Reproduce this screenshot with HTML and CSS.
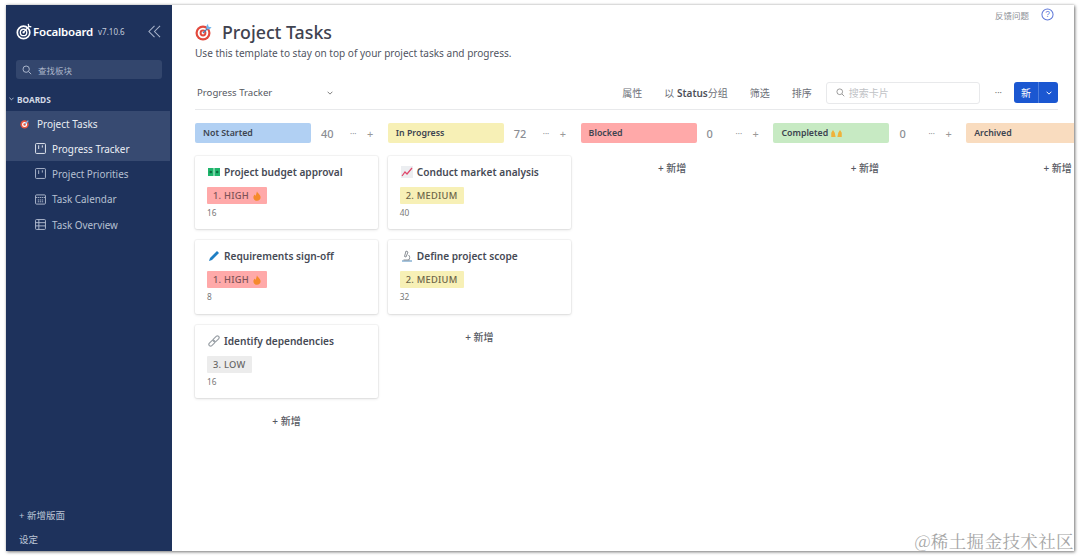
FILE: index.html
```html
<!DOCTYPE html>
<html lang="zh">
<head>
<meta charset="utf-8">
<title>Project Tasks</title>
<link rel="stylesheet" href="styles.css">
</head>
<body>
<div class="window">
  <aside class="sidebar">
    <div class="brand">
      <svg class="logo" viewBox="0 0 18 18" width="17" height="17"><circle cx="8" cy="10" r="6.600" fill="none" stroke="#fff" stroke-width="1.800"/><circle cx="8" cy="10" r="3.400" fill="none" stroke="#fff" stroke-width="1.400"/><circle cx="8" cy="10" r="1.200" fill="#fff"/><path d="M8 10 14 3M13 1l.6 2.600 2.600.4" fill="none" stroke="#fff" stroke-width="1.400"/></svg>
      <span class="brand-name">Focalboard</span>
      <span class="version">v7.10.6</span>
      <svg class="collapse" viewBox="0 0 14 14" width="13" height="13"><path d="M7 1 1 7l6 6M13 1 7 7l6 6" fill="none" stroke="#a9b4ca" stroke-width="1.100"/></svg>
    </div>
    <div class="side-search">
      <svg viewBox="0 0 12 12" width="10" height="10"><circle cx="5" cy="5" r="3.800" fill="none" stroke="#b5c0d4" stroke-width="1.100"/><path d="m8 8 3 3" stroke="#b5c0d4" stroke-width="1.100"/></svg>
      <span>查找板块</span>
    </div>
    <div class="section"><svg viewBox="0 0 6 4" width="5" height="4"><path d="m.5.5 2.500 2.500L5.500.5" fill="none" stroke="#c9d1e0" stroke-width="1"/></svg><span>BOARDS</span></div>
    <div class="active-group">
      <div class="board-row">
        <svg class="target-small" viewBox="0 0 12 12" width="10" height="10"><circle cx="5.500" cy="6.500" r="5" fill="#e8553f"/><circle cx="5.500" cy="6.500" r="3" fill="#fff"/><circle cx="5.500" cy="6.500" r="1.500" fill="#e8553f"/><path d="m6 6 4-4" stroke="#7fb2e5" stroke-width="1.500"/></svg>
        <span>Project Tasks</span>
      </div>
      <div class="view-row current">
        <svg viewBox="0 0 12 12" width="11" height="11"><rect x=".6" y=".6" width="10.800" height="10.800" rx="1" fill="none" stroke="currentColor"/><path d="M4 2.500v4M8 2.500v2.500" stroke="currentColor"/></svg>
        <span>Progress Tracker</span>
      </div>
    </div>
    <div class="view-row">
      <svg viewBox="0 0 12 12" width="11" height="11"><rect x=".6" y=".6" width="10.800" height="10.800" rx="1" fill="none" stroke="currentColor"/><path d="M4 2.500v4M8 2.500v2.500" stroke="currentColor"/></svg>
      <span>Project Priorities</span>
    </div>
    <div class="view-row">
      <svg viewBox="0 0 12 12" width="11" height="11"><rect x=".6" y="1" width="10.800" height="10" rx="1" fill="none" stroke="currentColor"/><path d="M.6 3.800h10.800M3 6.500h6M3 8.500h6" stroke="currentColor" stroke-dasharray="1.500 .7"/></svg>
      <span>Task Calendar</span>
    </div>
    <div class="view-row">
      <svg viewBox="0 0 12 12" width="11" height="11"><rect x=".6" y=".6" width="10.800" height="10.800" rx="1" fill="none" stroke="currentColor"/><path d="M.6 4h10.800M.6 7.500h10.800M4.200 .6v10.800" stroke="currentColor"/></svg>
      <span>Task Overview</span>
    </div>
    <div class="side-foot">
      <div class="foot-add">+ 新增版面</div>
      <div class="foot-set">设定</div>
    </div>
  </aside>

  <main class="main">
    <div class="topbar">
      <span class="feedback">反馈问题</span>
      <svg viewBox="0 0 14 14" width="13" height="13"><circle cx="7" cy="7" r="6" fill="none" stroke="#5f78d8" stroke-width="1.100"/><text x="7" y="10.200" text-anchor="middle" class="help-q">?</text></svg>
    </div>
    <div class="title-row">
      <svg viewBox="0 0 18 18" width="18" height="18"><circle cx="8" cy="10" r="7.500" fill="#e2493d"/><circle cx="8" cy="10" r="5.300" fill="#fff"/><circle cx="8" cy="10" r="3.400" fill="#e2493d"/><circle cx="8" cy="10" r="1.400" fill="#fff"/><path d="m8 10 6-6" stroke="#4c7fb8" stroke-width="1.200"/><path d="m13 .8.400 2.900 3.200.5-2.200 2.200-2.700-.5-.5-2.700z" fill="#6fb4ea"/></svg>
      <h1>Project Tasks</h1>
    </div>
    <p class="desc">Use this template to stay on top of your project tasks and progress.</p>

    <div class="toolbar">
      <div class="view-select">
        <span>Progress Tracker</span>
        <svg viewBox="0 0 8 5" width="6" height="4"><path d="m.8.800 3.200 3.200L7.200.800" fill="none" stroke="#555" stroke-width="1"/></svg>
      </div>
      <div class="tools">
        <span class="tool">属性</span>
        <span class="tool">以 <b>Status</b>分组</span>
        <span class="tool">筛选</span>
        <span class="tool">排序</span>
        <div class="card-search">
          <svg viewBox="0 0 12 12" width="9" height="9"><circle cx="5" cy="5" r="3.800" fill="none" stroke="#888" stroke-width="1.100"/><path d="m8 8 3 3" stroke="#888" stroke-width="1.100"/></svg>
          <span>搜索卡片</span>
        </div>
        <span class="tool-more">···</span>
        <div class="new-btn"><span class="new-label">新</span><span class="new-drop"><svg viewBox="0 0 8 5" width="6" height="4"><path d="m.8.800 3.200 3.200L7.200.800" fill="none" stroke="#fff" stroke-width="1.300"/></svg></span></div>
      </div>
    </div>

    <div class="board">
      <section class="col">
        <header class="col-head"><span class="pill blue">Not Started</span><span class="count">40</span><span class="dots">···</span><span class="plus">+</span></header>
        <article class="card">
          <div class="card-title">
            <svg viewBox="0 0 12 12" width="12" height="12"><rect y="2" width="5.600" height="8" fill="#1fb56c"/><rect x="6.400" y="2" width="5.600" height="8" fill="#1fb56c"/><circle cx="2.800" cy="6" r="1.300" fill="#0c6b3f"/><circle cx="9.200" cy="6" r="1.300" fill="#0c6b3f"/></svg>
            <span>Project budget approval</span>
          </div>
          <span class="tag high">1. HIGH <svg viewBox="0 0 10 12" width="8" height="10"><path d="M5 0c.5 2.500 4.500 4 4.500 7.500C9.500 10 7.500 12 5 12S.5 10 .5 7.500C.5 6 1.500 5 2 4c.5 1 1 1.500 1.500 1.500C4 4 4.500 2 5 0z" fill="#f58a2c"/></svg></span>
          <div class="num">16</div>
        </article>
        <article class="card">
          <div class="card-title">
            <svg viewBox="0 0 12 12" width="12" height="12"><path d="M1 11l1-3 7-7 2 2-7 7z" fill="#1f7fc4"/></svg>
            <span>Requirements sign-off</span>
          </div>
          <span class="tag high">1. HIGH <svg viewBox="0 0 10 12" width="8" height="10"><path d="M5 0c.5 2.500 4.500 4 4.500 7.500C9.500 10 7.500 12 5 12S.5 10 .5 7.500C.5 6 1.500 5 2 4c.5 1 1 1.500 1.500 1.500C4 4 4.500 2 5 0z" fill="#f58a2c"/></svg></span>
          <div class="num">8</div>
        </article>
        <article class="card">
          <div class="card-title">
            <svg viewBox="0 0 12 12" width="12" height="12"><g fill="none" stroke="#9aa0a6" stroke-width="1.200" transform="rotate(-45 6 6)"><rect x="-.5" y="4.300" width="7" height="3.400" rx="1.700"/><rect x="5.500" y="4.300" width="7" height="3.400" rx="1.700"/></g></svg>
            <span>Identify dependencies</span>
          </div>
          <span class="tag low">3. LOW</span>
          <div class="num">16</div>
        </article>
        <div class="add">+ 新增</div>
      </section>

      <section class="col">
        <header class="col-head"><span class="pill yellow">In Progress</span><span class="count">72</span><span class="dots">···</span><span class="plus">+</span></header>
        <article class="card">
          <div class="card-title">
            <svg viewBox="0 0 12 12" width="12" height="12"><rect width="12" height="12" fill="#eceef1"/><path d="m1 10 3-4 2 2 5-6" fill="none" stroke="#e0476b" stroke-width="1.200"/></svg>
            <span>Conduct market analysis</span>
          </div>
          <span class="tag medium">2. MEDIUM</span>
          <div class="num">40</div>
        </article>
        <article class="card">
          <div class="card-title">
            <svg viewBox="0 0 12 12" width="12" height="12"><path d="M1 11h10" stroke="#6b9fc9" stroke-width="1.200"/><path d="M5 1l2 1-2 5-1.500-.5zM7.500 5a3.200 3.200 0 0 1 0 5M2.500 10h6" fill="none" stroke="#8a9096" stroke-width="1"/></svg>
            <span>Define project scope</span>
          </div>
          <span class="tag medium">2. MEDIUM</span>
          <div class="num">32</div>
        </article>
        <div class="add">+ 新增</div>
      </section>

      <section class="col">
        <header class="col-head"><span class="pill red">Blocked</span><span class="count">0</span><span class="dots">···</span><span class="plus">+</span></header>
        <div class="add first">+ 新增</div>
      </section>

      <section class="col">
        <header class="col-head"><span class="pill green">Completed <svg viewBox="0 0 12 8" width="11" height="7"><path d="M0 8V3l2-3 2 3 1 5zM12 8V3l-2-3-2 3-1 5z" fill="#efb23a"/></svg></span><span class="count">0</span><span class="dots">···</span><span class="plus">+</span></header>
        <div class="add first">+ 新增</div>
      </section>

      <section class="col">
        <header class="col-head"><span class="pill orange">Archived</span></header>
        <div class="add first">+ 新增</div>
      </section>
    </div>
  </main>
</div>
<div class="watermark">@稀土掘金技术社区</div>
</body>
</html>
```
FILE: styles.css
```css
* { box-sizing: border-box; }
html, body { height: 100%; }
body {
  margin: 0;
  overflow: hidden;
  background: #fff;
  font-family: "Noto Sans", "Noto Sans CJK SC", sans-serif;
  color: #3f4350;
}
.window {
  position: relative;
  display: flex;
  width: 1068px;
  height: 546px;
  margin: 5px 0 0 6px;
  overflow: hidden;
  box-shadow: 1px 1px 3px rgba(0, 0, 0, .55), 0 -1px 2px rgba(0, 0, 0, .08);
}
.sidebar {
  flex: 0 0 166px;
  display: flex;
  flex-direction: column;
  background: #1e325c;
  color: #dfe4ed;
}
.brand {
  display: flex;
  align-items: center;
  height: 17px;
  margin: 18px 0 0 10px;
}
.brand-name { font-size: 11.500px; font-weight: 600; color: #fff; letter-spacing: -.2px; }
.version { margin-left: 5px; font-size: 8px; color: #c3cbdb; }
.collapse { margin-left: 23px; }
.side-search {
  display: flex;
  align-items: center;
  gap: 6px;
  height: 19px;
  margin: 20px 10px 0;
  padding-left: 6px;
  border-radius: 3px;
  background: #33466d;
  font-size: 8.500px;
  color: #aab5c9;
}
.section {
  display: flex;
  align-items: center;
  gap: 3px;
  height: 14px;
  margin: 13px 0 5px 3px;
  font-size: 8.300px;
  font-weight: 700;
  color: #d3d9e5;
}
.active-group { width: 164px; background: #374a71; }
.board-row {
  display: flex;
  align-items: center;
  gap: 7px;
  height: 25px;
  padding-left: 14px;
  font-size: 10px;
  color: #e8ecf2;
}
.view-row {
  display: flex;
  align-items: center;
  gap: 6px;
  height: 25.300px;
  padding-left: 29px;
  font-size: 9.900px;
  color: #b6c0d2;
}
.view-row.current { color: #eef1f6; }
.side-foot { margin-top: auto; padding-left: 13px; font-size: 9.500px; color: #bcc5d6; }
.foot-add { height: 25px; line-height: 25px; }
.foot-set { height: 23px; line-height: 23px; }

.main {
  flex: 1;
  min-width: 0;
  display: flex;
  flex-direction: column;
  padding-left: 23px;
  background: #fff;
}
.topbar {
  display: flex;
  justify-content: flex-end;
  align-items: center;
  gap: 12px;
  height: 18px;
  padding: 1px 20px 0 0;
  font-size: 8.500px;
  color: #8a8d94;
}
.help-q { font: 9px "Liberation Sans", sans-serif; fill: #5f78d8; }
.title-row { display: flex; align-items: center; gap: 9px; height: 20px; margin-top: -1px; }
h1 { margin: 0; font-size: 17.800px; font-weight: 500; line-height: 20px; color: #3f4350; }
.desc { margin: 4px 0 0; font-size: 10.050px; line-height: 14px; color: #50545f; }
.toolbar {
  display: flex;
  align-items: center;
  justify-content: space-between;
  width: 863px;
  height: 30px;
  margin-top: 20px;
  border-bottom: 1px solid #e8e9eb;
}
.view-select { display: flex; align-items: center; gap: 55px; padding: 0 0 4px 2px; font-size: 9.600px; color: #55585f; }
.tools { display: flex; align-items: center; padding-bottom: 4px; font-size: 10px; color: #6d7078; }
.tool { margin-right: 22px; }
.tool b { font-weight: 600; color: #4e5159; }
.tool:nth-child(4) { margin-right: 14px; }
.card-search {
  display: flex;
  align-items: center;
  gap: 4px;
  width: 154px;
  height: 22px;
  padding-left: 9px;
  border: 1px solid #e8e9eb;
  border-radius: 3px;
  font-size: 10px;
  color: #c0c2c6;
}
.tool-more { margin: 0 12px 0 15px; font-size: 9px; color: #777; }
.new-btn {
  display: flex;
  height: 21px;
  border-radius: 3px;
  background: #1b57d1;
  color: #fff;
}
.new-label { display: flex; align-items: center; justify-content: center; width: 25px; font-size: 10px; border-right: 1px solid #4f7edc; }
.new-drop { display: flex; align-items: center; justify-content: center; width: 19px; }
.board { display: flex; gap: 9.800px; margin-top: 13px; width: 890px; }
.col { flex: 0 0 183px; display: flex; flex-direction: column; }
.col-head { display: flex; align-items: center; height: 20px; margin-bottom: 13px; }
.col .col-head + .add.first { margin-top: 5px; }
.pill {
  display: flex;
  align-items: center;
  gap: 3px;
  flex: 0 0 116px;
  height: 20px;
  padding-left: 8px;
  border-radius: 2px;
  font-size: 8.800px;
  font-weight: 600;
  color: #3d4450;
}
.blue { background: #b1d0f3; }
.yellow { background: #f7f0b6; }
.red { background: #ffa9a9; }
.green { background: #c7eac3; }
.orange { background: #f9dcbf; }
.count { margin-left: 10px; width: 22px; font-size: 11px; font-weight: 500; color: #8a8d93; }
.dots { margin-left: 7px; width: 17px; font-size: 8px; color: #8e9095; }
.plus { font-size: 11px; color: #999; }
.card {
  display: flex;
  flex-direction: column;
  align-items: flex-start;
  height: 73.300px;
  margin-bottom: 11px;
  padding: 9px 12px 0;
  border-radius: 2px;
  background: #fff;
  box-shadow: 0 0 0 1px rgba(0, 0, 0, .035), 0 1px 3px rgba(0, 0, 0, .12);
}
.card-title {
  display: flex;
  align-items: center;
  gap: 4px;
  height: 14px;
  font-size: 10.150px;
  font-weight: 600;
  color: #464a55;
  white-space: nowrap;
}
.card-title svg { margin-left: 1px; }
.tag {
  display: inline-flex;
  align-items: center;
  gap: 4px;
  height: 17px;
  margin-top: 8px;
  padding: 0 6px;
  border-radius: 1px;
  font-size: 9.300px;
  font-weight: 500;
  letter-spacing: .25px;
  color: #6a5a5a;
}
.high { background: #ffa9a9; color: #7d5257; }
.medium { background: #f7f0b6; color: #6b6448; }
.low { background: #ececec; color: #666; }
.num { margin-top: 3px; font-size: 8.300px; line-height: 12px; color: #777; }
.add { text-align: center; height: 14px; margin-top: 5px; font-size: 10px; font-weight: 500; line-height: 14px; color: #555861; }
.watermark {
  position: absolute;
  right: 6px;
  bottom: 6px;
  font-family: "Noto Serif CJK SC", "Noto Sans CJK SC", sans-serif;
  font-size: 17.500px;
  line-height: 20px;
  letter-spacing: .4px;
  color: #a5a5a5;
}
```
